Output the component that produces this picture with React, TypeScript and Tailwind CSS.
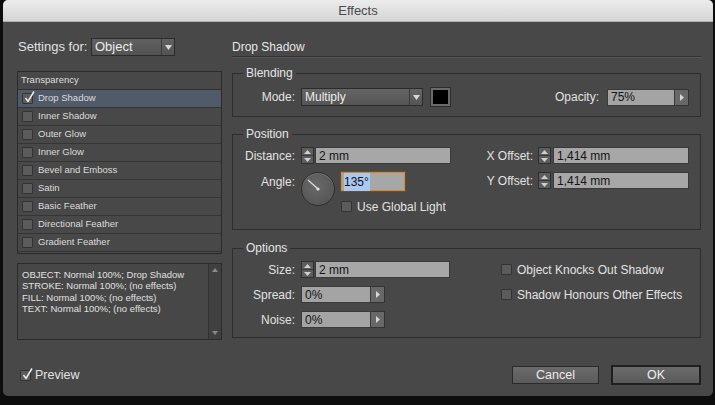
import React from 'react';

const effects = [
  'Drop Shadow',
  'Inner Shadow',
  'Outer Glow',
  'Inner Glow',
  'Bevel and Emboss',
  'Satin',
  'Basic Feather',
  'Directional Feather',
  'Gradient Feather',
];

const summary = [
  'OBJECT: Normal 100%; Drop Shadow',
  'STROKE: Normal 100%; (no effects)',
  'FILL: Normal 100%; (no effects)',
  'TEXT: Normal 100%; (no effects)',
];

const Check = () => (
  <svg
    className="absolute left-[1px] top-[-3px] w-[11px] h-[12px]"
    viewBox="0 0 11 12"
    fill="none"
  >
    <path d="M1.5 7 L4 10.5 L10 0.5" stroke="#ececec" strokeWidth="1.5" />
  </svg>
);

const Checkbox = ({ checked = false }: { checked?: boolean }) => (
  <span className="relative inline-block shrink-0 w-[11px] h-[11px] bg-[#5b5b5b] border border-[#333333] rounded-[1px]">
    {checked && <Check />}
  </span>
);

const Spinner = () => (
  <div className="flex flex-col w-[13px] h-[17px] border border-[#2f2f2f] bg-[#5d5d5d] shrink-0">
    <div className="flex-1 flex items-center justify-center border-b border-[#3a3a3a]">
      <svg width="7" height="4" viewBox="0 0 7 4">
        <path d="M0 4 L3.5 0 L7 4 Z" fill="#cfcfcf" />
      </svg>
    </div>
    <div className="flex-1 flex items-center justify-center">
      <svg width="7" height="4" viewBox="0 0 7 4">
        <path d="M0 0 L3.5 4 L7 0 Z" fill="#cfcfcf" />
      </svg>
    </div>
  </div>
);

const Field = ({ value, w }: { value: string; w: string }) => (
  <div
    className={`${w} h-[17px] flex items-center pl-[3px] bg-[#a7a7a7] border border-[#3a3a3a] text-[12px] text-[#141414]`}
  >
    {value}
  </div>
);

const ArrowField = ({ value, w }: { value: string; w: string }) => (
  <div className="flex h-[17px]">
    <div
      className={`${w} h-full flex items-center pl-[3px] bg-[#a4a4a4] border border-[#3a3a3a] text-[12px] text-[#141414]`}
    >
      {value}
    </div>
    <div className="w-[14px] h-full flex items-center justify-center bg-[#686868] border border-l-0 border-[#333333]">
      <svg width="4" height="7" viewBox="0 0 4 7">
        <path d="M0 0 L4 3.5 L0 7 Z" fill="#d6d6d6" />
      </svg>
    </div>
  </div>
);

const Label = ({ text, w = 'w-[62px]' }: { text: string; w?: string }) => (
  <span className={`${w} shrink-0 text-right text-[12px] text-[#e2e2e2]`}>{text}</span>
);

const Legend = ({ text }: { text: string }) => (
  <legend className="ml-[10px] px-[3px] text-[12px] leading-[14px] text-[#e6e6e6]">{text}</legend>
);

export default function App() {
  return (
    <div className="w-[715px] h-[405px] bg-[#0d0d0d] overflow-hidden font-['Liberation_Sans',Arial,sans-serif]">
      <div className="ml-[3px] w-[710px] h-[396px] rounded-[5px] overflow-hidden bg-[#484848] flex flex-col">
        {/* title bar */}
        <div className="h-[22px] shrink-0 flex items-center justify-center bg-gradient-to-b from-[#ececec] to-[#d5d5d5] border-b border-[#b0b0b0] text-[13px] text-[#4a4a4a]">
          Effects
        </div>

        <div className="flex pl-[14px] pr-[12px] pt-[16px]">
          {/* left column */}
          <div className="w-[205px] shrink-0 flex flex-col">
            <div className="h-[18px] flex items-center">
              <span className="w-[74px] pl-[1px] text-[13px] text-[#e2e2e2]">Settings for:</span>
              <div className="w-[84px] h-[18px] flex border border-[#2b2b2b] bg-gradient-to-b from-[#616161] to-[#535353]">
                <span className="flex-1 flex items-center pl-[3px] text-[13px] text-[#ececec]">Object</span>
                <span className="w-[13px] flex items-center justify-center border-l border-[#3a3a3a]">
                  <svg width="7" height="5" viewBox="0 0 7 5">
                    <path d="M0 0 L7 0 L3.5 5 Z" fill="#d8d8d8" />
                  </svg>
                </span>
              </div>
            </div>

            <div className="mt-[15px] h-[183px] border border-[#2b2b2b] flex flex-col">
              <div className="h-[18px] shrink-0 flex items-center pl-[3px] border-b border-[#303030] text-[9.5px] text-[#dedede]">
                Transparency
              </div>
              {effects.map((name, i) => (
                <div
                  key={name}
                  className={`h-[18px] shrink-0 flex items-center pl-[4px] border-b border-[#353535] text-[9.5px] text-[#dcdcdc] ${
                    i === 0 ? 'bg-[#505a69]' : ''
                  }`}
                >
                  <Checkbox checked={i === 0} />
                  <span className="ml-[5px]">{name}</span>
                </div>
              ))}
            </div>

            <div className="mt-[9px] h-[77px] flex border border-[#2b2b2b] bg-[#474747]">
              <div className="flex-1 pl-[4px] pt-[5px] text-[9.5px] leading-[11.3px] text-[#e0e0e0]">
                {summary.map((line) => (
                  <div key={line}>{line}</div>
                ))}
              </div>
              <div className="w-[13px] flex flex-col justify-between items-center py-[4px] bg-[#404040] border-l border-[#333333]">
                <svg width="6" height="4" viewBox="0 0 6 4">
                  <path d="M0 4 L3 0 L6 4 Z" fill="#8a8a8a" />
                </svg>
                <svg width="6" height="4" viewBox="0 0 6 4">
                  <path d="M0 0 L3 4 L6 0 Z" fill="#8a8a8a" />
                </svg>
              </div>
            </div>
          </div>

          {/* right column */}
          <div className="ml-[10px] w-[469px] shrink-0 flex flex-col">
            <div className="h-[19px] flex items-center border-b border-[#333333] shadow-[0_1px_0_#585858] text-[12px] text-[#e6e6e6]">
              Drop Shadow
            </div>

            {/* Blending */}
            <fieldset className="mt-[9px] border border-[#2e2e2e] pt-[7px] pb-[9px] pr-[11px]">
              <Legend text="Blending" />
              <div className="h-[20px] flex items-center">
                <Label text="Mode:" />
                <div className="ml-[6px] w-[122px] h-[18px] flex border border-[#2b2b2b] bg-gradient-to-b from-[#646464] to-[#555555]">
                  <span className="flex-1 flex items-center pl-[3px] text-[12px] text-[#ececec]">Multiply</span>
                  <span className="w-[13px] flex items-center justify-center border-l border-[#3a3a3a]">
                    <svg width="7" height="5" viewBox="0 0 7 5">
                      <path d="M0 0 L7 0 L3.5 5 Z" fill="#d8d8d8" />
                    </svg>
                  </span>
                </div>
                <div className="ml-[7px] w-[21px] h-[20px] p-[2px] bg-[#6a6a6a] border border-[#2e2e2e]">
                  <div className="w-full h-full bg-black" />
                </div>
                <div className="flex-1" />
                <span className="text-[12px] text-[#e2e2e2]">Opacity:</span>
                <div className="ml-[8px]">
                  <ArrowField value="75%" w="w-[68px]" />
                </div>
              </div>
            </fieldset>

            {/* Position */}
            <fieldset className="mt-[10px] border border-[#2e2e2e] pt-[6px] pb-[17px] pr-[11px]">
              <Legend text="Position" />
              <div className="flex">
                <div className="flex flex-col">
                  <div className="h-[17px] flex items-center">
                    <Label text="Distance:" />
                    <div className="ml-[6px] flex gap-[1px]">
                      <Spinner />
                      <Field value="2 mm" w="w-[136px]" />
                    </div>
                  </div>
                  <div className="mt-[8px] flex items-start">
                    <div className="h-[19px] flex items-center">
                      <Label text="Angle:" />
                    </div>
                    <div className="ml-[6px] w-[34px] h-[34px] rounded-full border border-[#2e2e2e] bg-[radial-gradient(circle_at_45%_40%,#6a6a6a,#4f4f4f)] shadow-[inset_0_1px_0_#727272]">
                      <svg width="32" height="32" viewBox="0 0 32 32">
                        <line x1="16" y1="16" x2="6" y2="7" stroke="#dadada" strokeWidth="1.3" />
                        <circle cx="16" cy="16" r="1.6" fill="#e4e4e4" />
                      </svg>
                    </div>
                    <div className="ml-[6px] flex flex-col">
                      <div className="w-[64px] h-[19px] flex items-center pl-[2px] bg-[#a7a7a7] border border-[#d08a2c] shadow-[0_0_0_1px_#6a5032] text-[12px] text-[#141414]">
                        <span className="bg-[#a9c8f2] pr-[1px]">135°</span>
                      </div>
                      <div className="mt-[10px] flex items-center h-[11px]">
                        <Checkbox />
                        <span className="ml-[5px] text-[12px] text-[#e2e2e2]">Use Global Light</span>
                      </div>
                    </div>
                  </div>
                </div>

                <div className="ml-auto flex flex-col">
                  <div className="h-[17px] flex items-center">
                    <Label text="X Offset:" w="w-[70px]" />
                    <div className="ml-[5px] flex gap-[2px]">
                      <Spinner />
                      <Field value="1,414 mm" w="w-[136px]" />
                    </div>
                  </div>
                  <div className="mt-[8px] h-[17px] flex items-center">
                    <Label text="Y Offset:" w="w-[70px]" />
                    <div className="ml-[5px] flex gap-[2px]">
                      <Spinner />
                      <Field value="1,414 mm" w="w-[136px]" />
                    </div>
                  </div>
                </div>
              </div>
            </fieldset>

            {/* Options */}
            <fieldset className="mt-[11px] border border-[#2e2e2e] pt-[6px] pb-[9px] pr-[11px]">
              <Legend text="Options" />
              <div className="flex">
                <div className="flex flex-col gap-[8px]">
                  <div className="h-[17px] flex items-center">
                    <Label text="Size:" />
                    <div className="ml-[6px] flex gap-[1px]">
                      <Spinner />
                      <Field value="2 mm" w="w-[135px]" />
                    </div>
                  </div>
                  <div className="h-[17px] flex items-center">
                    <Label text="Spread:" />
                    <div className="ml-[6px]">
                      <ArrowField value="0%" w="w-[70px]" />
                    </div>
                  </div>
                  <div className="h-[17px] flex items-center">
                    <Label text="Noise:" />
                    <div className="ml-[6px]">
                      <ArrowField value="0%" w="w-[70px]" />
                    </div>
                  </div>
                </div>

                <div className="ml-[51px] flex flex-col gap-[8px]">
                  <div className="h-[17px] flex items-center">
                    <Checkbox />
                    <span className="ml-[5px] text-[12px] text-[#e2e2e2]">Object Knocks Out Shadow</span>
                  </div>
                  <div className="h-[17px] flex items-center">
                    <Checkbox />
                    <span className="ml-[5px] text-[12px] text-[#e2e2e2]">Shadow Honours Other Effects</span>
                  </div>
                </div>
              </div>
            </fieldset>
          </div>
        </div>

        {/* bottom row */}
        <div className="mt-[25px] h-[20px] flex items-center pl-[17px] pr-[12px]">
          <Checkbox checked />
          <span className="ml-[4px] text-[12.5px] text-[#e2e2e2]">Preview</span>
          <button className="ml-auto w-[87px] h-[18px] flex items-center justify-center border border-[#2a2a2a] bg-gradient-to-b from-[#6b6b6b] to-[#5a5a5a] text-[12.5px] text-[#ececec]">
            Cancel
          </button>
          <button className="ml-[12px] w-[90px] h-[20px] flex items-center justify-center border-2 border-[#1f1f1f] bg-gradient-to-b from-[#6b6b6b] to-[#5a5a5a] text-[12.5px] text-[#f0f0f0]">
            OK
          </button>
        </div>
      </div>
    </div>
  );
}
